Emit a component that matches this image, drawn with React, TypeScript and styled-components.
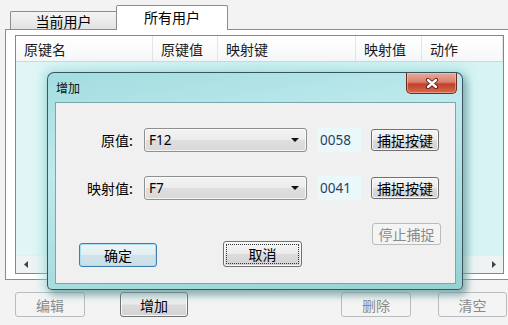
import React from 'react';
import styled, { createGlobalStyle, css } from 'styled-components';

const Global = createGlobalStyle`
  html, body {
    margin: 0;
    padding: 0;
    background: #f3f3f3;
  }
  * { box-sizing: border-box; }
`;

const cjk = `"Noto Sans CJK SC", "Noto Sans", sans-serif`;
const latin = `"Noto Sans", "Noto Sans CJK SC", sans-serif`;

const Screen = styled.div`
  position: relative;
  width: 508px;
  height: 325px;
  overflow: hidden;
  background: #f3f3f3;
  font-family: ${cjk};
  color: #000;
`;

const MainWindow = styled.div`
  display: flex;
  flex-direction: column;
  height: 100%;
`;

const TabStrip = styled.div`
  display: flex;
  align-items: flex-end;
  height: 29px;
  padding-left: 10px;
  position: relative;
  z-index: 1;
`;

const Tab = styled.div<{ $active?: boolean }>`
  display: flex;
  align-items: center;
  justify-content: center;
  font-size: 14px;
  border: 1px solid #898c95;
  border-bottom: none;
  ${(p) =>
    p.$active
      ? css`
          width: 112px;
          height: 25px;
          margin-bottom: -1px;
          background: #ffffff;
          border-radius: 2px 2px 0 0;
          padding-bottom: 2px;
        `
      : css`
          width: 106px;
          height: 18px;
          background: linear-gradient(#f4f4f4, #e2e2e2);
          border-right: none;
          border-radius: 2px 0 0 0;
        `}
`;

const Panel = styled.div`
  margin-left: 5px;
  height: 251px;
  border: 1px solid #898c95;
  border-right: none;
  background: #ffffff;
  padding: 5px 0 0 9px;
`;

const ListView = styled.div`
  width: 489px;
  height: 239px;
  border: 1px solid #828790;
  display: flex;
  flex-direction: column;
  background: #dcf4f4;
`;

const Header = styled.div`
  display: flex;
  height: 26px;
  background: linear-gradient(#ffffff, #f6f7f8);
  border-bottom: 1px solid #d5d5d5;
  flex-shrink: 0;
`;

const HeadCell = styled.div<{ $w?: number }>`
  ${(p) => (p.$w ? `width: ${p.$w}px;` : 'flex: 1;')}
  border-right: 1px solid #e3e5e8;
  padding-left: 8px;
  font-size: 14px;
  line-height: 26px;
  color: #1a1a1a;
`;

const ListBody = styled.div`
  flex: 1;
  background: linear-gradient(90deg, #e2f6f6, #d0f0f1 50%, #d8f3f3);
`;

const HScroll = styled.div`
  height: 18px;
  display: flex;
  align-items: center;
  justify-content: space-between;
  background: #eef4f4;
  border-top: 1px solid #e6eeee;
  padding: 0 1px;
  flex-shrink: 0;
`;

const ScrollArrow = styled.div`
  width: 17px;
  height: 16px;
  display: flex;
  align-items: center;
  justify-content: center;
`;

const ButtonRow = styled.div`
  display: flex;
  margin-top: 12px;
  padding-left: 15px;
`;

const WinButton = styled.button<{ $w: number; $h?: number; $disabled?: boolean; $gap?: number }>`
  width: ${(p) => p.$w}px;
  height: ${(p) => p.$h ?? 24}px;
  margin-left: ${(p) => p.$gap ?? 0}px;
  padding: 0;
  font-family: ${cjk};
  font-size: 14px;
  border-radius: 3px;
  position: relative;
  ${(p) =>
    p.$disabled
      ? css`
          border: 1px solid #b8bcbf;
          background: #f4f4f4;
          color: #8a8a8a;
        `
      : css`
          border: 1px solid #707070;
          background: linear-gradient(#f6f6f6 0%, #ebebeb 48%, #dcdcdc 52%, #d2d2d2 100%);
          box-shadow: inset 0 0 0 1px rgba(255, 255, 255, 0.8);
          color: #000;
        `}
`;

const DefaultButton = styled(WinButton)`
  border: 1px solid #3c7fb1;
  background: linear-gradient(#eef5f7 0%, #e2eef2 48%, #d0e3ea 52%, #c9dfe7 100%);
  box-shadow: inset 0 0 0 1px #a9dff0;
`;

const FocusButton = styled(WinButton)`
  &::after {
    content: '';
    position: absolute;
    inset: 2px;
    border: 1px dotted #333;
    border-radius: 1px;
  }
`;

const Dialog = styled.div`
  position: absolute;
  left: 47px;
  top: 72px;
  width: 416px;
  height: 218px;
  border: 1px solid rgba(40, 60, 70, 0.85);
  border-radius: 7px 7px 5px 5px;
  background: linear-gradient(170deg, #a2dde0 0%, #c0eaed 35%, #a9dee1 70%, #94d2d4 100%);
  box-shadow: 0 0 10px 5px rgba(150, 220, 222, 0.55), 3px 4px 7px rgba(0, 0, 0, 0.45);
  display: flex;
  flex-direction: column;
  padding: 0 6px 5px 7px;
`;

const TitleBar = styled.div`
  height: 29px;
  display: flex;
  align-items: center;
  padding-left: 1px;
  font-size: 12px;
  color: #111;
`;

const CloseButton = styled.div`
  position: absolute;
  top: 0;
  right: 5px;
  width: 51px;
  height: 21px;
  border: 1px solid #6b2a22;
  border-top: none;
  border-radius: 0 0 5px 5px;
  background: linear-gradient(#e9a99b 0%, #d9826f 45%, #c2402b 55%, #d56a4d 100%);
  box-shadow: inset 0 0 0 1px rgba(255, 200, 190, 0.5);
  display: flex;
  align-items: center;
  justify-content: center;
`;

const Client = styled.div`
  flex: 1;
  background: #f0f0f0;
  border: 1px solid #7aa7ad;
  padding-top: 25px;
`;

const FieldRow = styled.div`
  display: grid;
  grid-template-columns: 78px 163px 44px 68px;
  column-gap: 10px;
  height: 24px;
  margin-bottom: 24px;
  align-items: center;
`;

const Label = styled.div`
  text-align: right;
  font-size: 14px;
  padding-right: 1px;
`;

const Combo = styled.div`
  height: 24px;
  border: 1px solid #8e8f8f;
  border-radius: 3px;
  background: linear-gradient(#f3f3f3 0%, #ececec 48%, #dedede 52%, #d9d9d9 100%);
  box-shadow: inset 0 0 0 1px rgba(255, 255, 255, 0.7);
  display: flex;
  align-items: center;
  justify-content: space-between;
  padding: 0 7px 0 4px;
  font-family: ${latin};
  font-size: 13.5px;
`;

const Arrow = styled.span`
  width: 0;
  height: 0;
  border-left: 4px solid transparent;
  border-right: 4px solid transparent;
  border-top: 4px solid #111;
`;

const CodeBox = styled.div`
  height: 24px;
  background: #ebf8f9;
  display: flex;
  align-items: center;
  padding-left: 3px;
  font-family: ${latin};
  font-size: 13.5px;
  color: #2b3f5f;
`;

const BottomArea = styled.div`
  display: flex;
  align-items: flex-start;
  margin-top: -1px;
  padding-left: 23px;
`;

const Dropped = styled.div<{ $top: number }>`
  margin-top: ${(p) => p.$top}px;
`;

const XIcon = () => (
  <svg width="14" height="11" viewBox="0 0 14 11">
    <path d="M3 2 L11 9 M11 2 L3 9" stroke="#5a1a12" strokeWidth="4.2" strokeLinecap="round" />
    <path d="M3 2 L11 9 M11 2 L3 9" stroke="#ffffff" strokeWidth="2.4" strokeLinecap="round" />
  </svg>
);

const columns = [
  { name: '原键名', w: 137 },
  { name: '原键值', w: 65 },
  { name: '映射键', w: 138 },
  { name: '映射值', w: 66 },
  { name: '动作' },
];

const rows = [
  { label: '原值:', key: 'F12', code: '0058' },
  { label: '映射值:', key: 'F7', code: '0041' },
];

export default function App() {
  return (
    <Screen>
      <Global />
      <MainWindow>
        <TabStrip>
          <Tab>当前用户</Tab>
          <Tab $active>所有用户</Tab>
        </TabStrip>
        <Panel>
          <ListView>
            <Header>
              {columns.map((c) => (
                <HeadCell key={c.name} $w={c.w}>
                  {c.name}
                </HeadCell>
              ))}
            </Header>
            <ListBody />
            <HScroll>
              <ScrollArrow>
                <svg width="4" height="7" viewBox="0 0 4 7">
                  <path d="M4 0 L0 3.5 L4 7 Z" fill="#444" />
                </svg>
              </ScrollArrow>
              <ScrollArrow>
                <svg width="4" height="7" viewBox="0 0 4 7">
                  <path d="M0 0 L4 3.5 L0 7 Z" fill="#444" />
                </svg>
              </ScrollArrow>
            </HScroll>
          </ListView>
        </Panel>
        <ButtonRow>
          <WinButton $w={70} $h={25} $disabled>编辑</WinButton>
          <WinButton $w={68} $h={25} $gap={35}>增加</WinButton>
          <WinButton $w={70} $h={25} $gap={153} $disabled>删除</WinButton>
          <WinButton $w={69} $h={25} $gap={27} $disabled>清空</WinButton>
        </ButtonRow>
      </MainWindow>

      <Dialog>
        <TitleBar>增加</TitleBar>
        <CloseButton>
          <XIcon />
        </CloseButton>
        <Client>
          {rows.map((r) => (
            <FieldRow key={r.label}>
              <Label>{r.label}</Label>
              <Combo>
                <span>{r.key}</span>
                <Arrow />
              </Combo>
              <CodeBox>{r.code}</CodeBox>
              <WinButton $w={68} $h={22}>捕捉按键</WinButton>
            </FieldRow>
          ))}
          <BottomArea>
            <Dropped $top={19}>
              <DefaultButton $w={78} $h={24}>确定</DefaultButton>
            </Dropped>
            <Dropped $top={18}>
              <FocusButton $w={79} $h={26} $gap={66}>取消</FocusButton>
            </Dropped>
            <WinButton $w={69} $h={22} $gap={70} $disabled>停止捕捉</WinButton>
          </BottomArea>
        </Client>
      </Dialog>
    </Screen>
  );
}
